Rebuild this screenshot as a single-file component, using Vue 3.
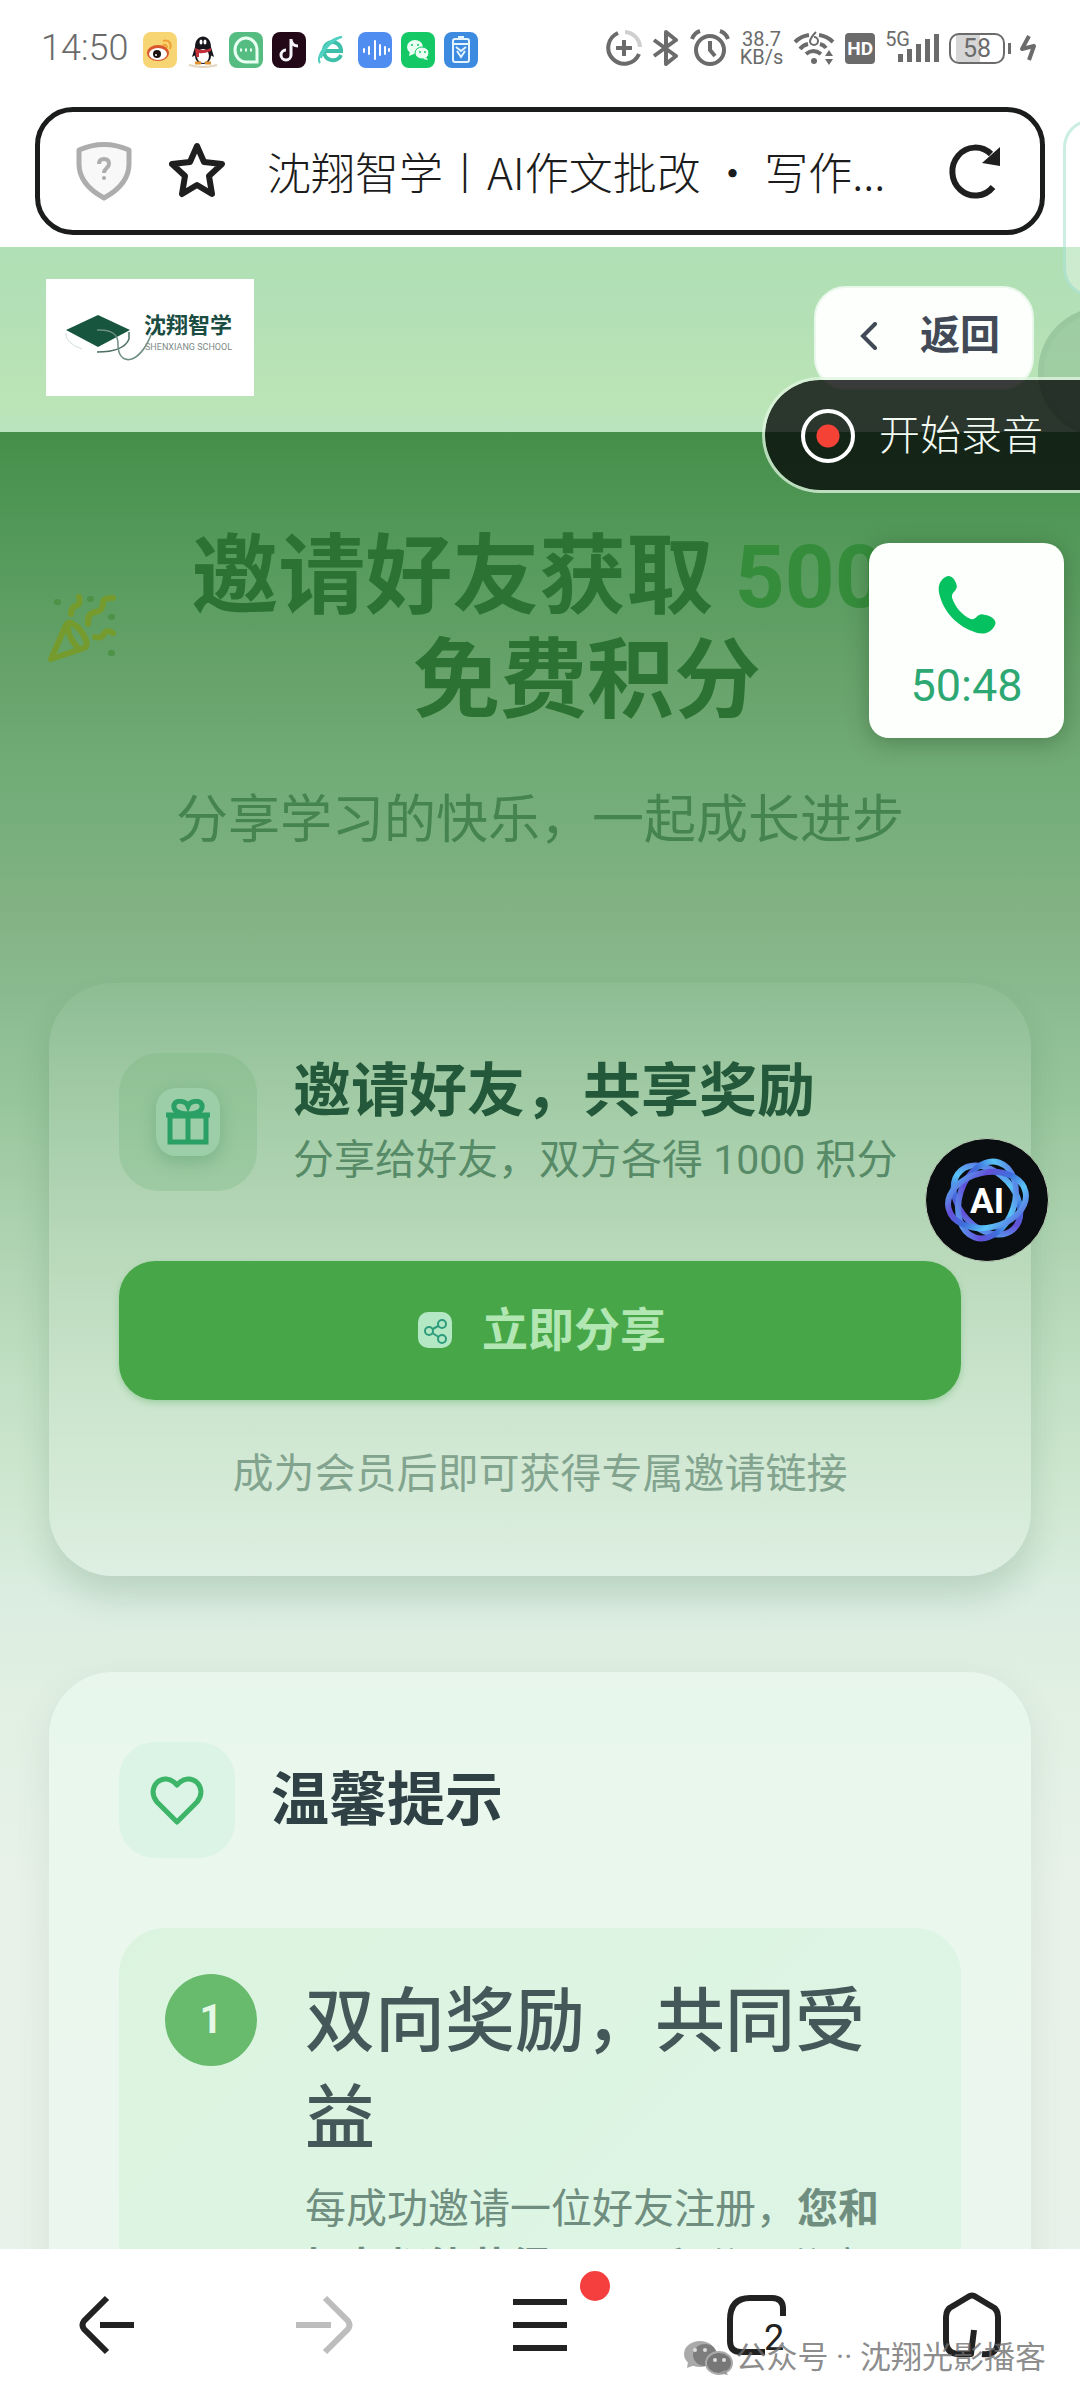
<script setup>
/**
 * COMPONENTE: App.vue
 * Descripción: Página de invitación dentro del navegador móvil.
 */
import { ref } from 'vue'

// --- ESTADO REACTIVO ---
const tituloPagina = ref('沈翔智学丨AI作文批改 ・ 写作...')
const numPestanas = ref(2)
const duracionLlamada = ref('50:48')

// Barras de cobertura (altura en px)
const cobertura = [8, 13, 18, 23, 28]

// Pétalos del logo de AI
const petalos = [0, 60, 120]
</script>

<template>
    <div class="pantalla">
        <!-- Barra de estado -->
        <div class="estado">
            <span class="hora">14:50</span>
            <div class="apps">
                <svg viewBox="0 0 34 36">
                    <rect width="34" height="36" rx="8" fill="#f7d573" />
                    <ellipse cx="15" cy="21" rx="11" ry="8" fill="#d9552c" />
                    <ellipse cx="15" cy="22" rx="9" ry="6" fill="#fff" />
                    <circle cx="14" cy="22" r="4" fill="#1d1410" />
                    <circle cx="13" cy="23" r="1" fill="#fff" />
                    <path d="M20 9c6-2 9 3 7 8M20 13c3-1 4 1 4 3" fill="none" stroke="#ef9f35" stroke-width="2" />
                </svg>
                <svg viewBox="0 0 34 36">
                    <path d="M3 33q14 4 28 0" fill="none" stroke="#e3d4bd" stroke-width="2" />
                    <path d="M9 15C9 1 25 1 25 15l3 10-4-2H10l-4 2z" fill="#15151b" />
                    <ellipse cx="17" cy="24" rx="8" ry="8" fill="#15151b" />
                    <ellipse cx="17" cy="24" rx="6" ry="7" fill="#fff" />
                    <ellipse cx="15" cy="10" rx="1.5" ry="2.5" fill="#fff" />
                    <ellipse cx="19" cy="10" rx="1.5" ry="2.5" fill="#fff" />
                    <path d="M9 16q8 4 16 0v3q-8 3-12 2v4h-3z" fill="#c3303a" />
                    <path d="M9 31h6M19 31h6" stroke="#e0902c" stroke-width="3" />
                </svg>
                <svg viewBox="0 0 34 36">
                    <rect width="34" height="36" rx="8" fill="#55bd82" />
                    <path d="M28 30V18a11 12 0 1 0-11 12z" fill="none" stroke="#e9fff2" stroke-width="3" />
                    <path d="M11 18h2M16 18h2M21 18h2" stroke="#e9fff2" stroke-width="3" />
                </svg>
                <svg viewBox="0 0 34 36">
                    <rect width="34" height="36" rx="8" fill="#230817" />
                    <path d="M19 7v16a5 5 0 1 1-5-5M19 8c1 4 3 6 7 6" fill="none" stroke="#f4f4f8" stroke-width="3" />
                </svg>
                <svg viewBox="0 0 34 36">
                    <path d="M9 19h17c0-12-17-12-17 0 0 11 14 12 17 4" fill="none" stroke="#3ebfa9" stroke-width="4" />
                    <path d="M5 31c-5-6 8-25 22-26-8 2-18 11-21 21" fill="none" stroke="#4fd0c0" stroke-width="2" />
                </svg>
                <svg viewBox="0 0 34 36">
                    <rect width="34" height="36" rx="8" fill="#4f8df0" />
                    <path d="M6 17v3M11 15v7M17 9v18M22 13v10M27 15v7M31 17v2" stroke="#fff" stroke-width="2"
                        stroke-linecap="round" />
                </svg>
                <svg viewBox="0 0 34 36">
                    <rect width="34" height="36" rx="8" fill="#14c866" />
                    <ellipse cx="14" cy="15" rx="8" ry="7" fill="#eafff2" />
                    <ellipse cx="21" cy="21" rx="7" ry="6" fill="#eafff2" stroke="#14c866" />
                    <path d="m9 19-1 5 5-2zM25 25l2 3-5-1z" fill="#eafff2" />
                    <circle cx="11" cy="13" r="1" fill="#14c866" />
                    <circle cx="17" cy="13" r="1" fill="#14c866" />
                    <circle cx="19" cy="20" r="1" fill="#14c866" />
                    <circle cx="24" cy="20" r="1" fill="#14c866" />
                </svg>
                <svg viewBox="0 0 34 36">
                    <rect width="34" height="36" rx="8" fill="#3c8be0" />
                    <rect x="9" y="7" width="16" height="23" rx="2" fill="none" stroke="#e4f4ff" stroke-width="2" />
                    <path d="M14 5h6M10 12h14M12 15l5 4 5-4M13 19l4 6 4-6" fill="none" stroke="#e4f4ff"
                        stroke-width="2" />
                </svg>
            </div>
            <div class="sistema">
                <svg width="36" height="38" viewBox="0 0 36 38">
                    <path d="M12 4a16 16 0 1 0 21 21" fill="none" stroke="#6b6b6b" stroke-width="4" />
                    <path d="M19 3a16 16 0 0 1 15 15" fill="none" stroke="#cfcfcf" stroke-width="4" />
                    <path d="M18 11v16M10 19h16" stroke="#6b6b6b" stroke-width="4" />
                </svg>
                <svg width="28" height="36" viewBox="0 0 28 36">
                    <path d="m2 10 22 16-10 8V2l10 8L2 26" fill="none" stroke="#6b6b6b" stroke-width="4"
                        stroke-linejoin="round" />
                </svg>
                <svg width="40" height="38" viewBox="0 0 40 38">
                    <circle cx="20" cy="21" r="14" fill="none" stroke="#6b6b6b" stroke-width="4" />
                    <path d="M20 12v9l5 6M2 10q2-6 8-8M38 10q-2-6-8-8" fill="none" stroke="#6b6b6b" stroke-width="4" />
                </svg>
                <span class="velocidad">38.7<br>KB/s</span>
                <svg width="42" height="36" viewBox="0 0 42 36">
                    <path d="M2 12q6-6 14-7M26 5q8 1 14 7M7 19q3-4 8-5M27 14q4 1 6 4M13 24q7-6 15 0" fill="none"
                        stroke="#6b6b6b" stroke-width="4" />
                    <path d="M23 2q-5 5-6 9a4 4 0 1 0 4-4" fill="none" stroke="#6b6b6b" stroke-width="2" />
                    <circle cx="21" cy="31" r="3" fill="#6b6b6b" />
                    <path d="m32 26 4-6 4 6zM32 29h8l-4 6z" fill="#6b6b6b" />
                </svg>
                <span class="hd">HD</span>
                <span class="red">5G</span>
                <span class="cobertura">
                    <i v-for="alto in cobertura" :key="alto" :style="{ height: alto + 'px' }"></i>
                </span>
                <span class="bateria">58</span>
                <svg width="18" height="28" viewBox="0 0 18 28">
                    <path d="M10 2 3 15l12-3-5 14" fill="none" stroke="#6b6b6b" stroke-width="4"
                        stroke-linejoin="round" />
                </svg>
            </div>
        </div>

        <!-- Barra de direcciones -->
        <div class="barra-url">
            <svg class="ico-url" viewBox="0 0 56 60">
                <path d="M3 9q25-11 50 0v14c0 17-14 28-25 34C17 51 3 40 3 23z" fill="#f8f8f8" stroke="#adadad"
                    stroke-width="5" stroke-linejoin="round" />
                <path d="M23 23q0-5 5-5t5 5c0 4-5 4-5 9" fill="none" stroke="#adadad" stroke-width="4" />
                <circle cx="28" cy="37" r="2" fill="#adadad" />
            </svg>
            <button type="button" class="btn-icono btn-estrella" aria-label="收藏">
                <svg class="ico-url" viewBox="0 0 56 60">
                    <path d="m28 5 7 16 18 2-13 12 3 18-15-9-15 9 3-18L3 23l18-2z" fill="none" stroke="#1f1f1f"
                        stroke-width="6" stroke-linejoin="round" />
                </svg>
            </button>
            <input v-model="tituloPagina" class="campo-url" type="text" aria-label="网址">
            <button type="button" class="btn-icono" aria-label="刷新">
                <svg class="ico-url" viewBox="0 0 56 60">
                    <path d="M45 46A23 24 0 1 1 43 13" fill="none" stroke="#1f1f1f" stroke-width="6" />
                    <path d="M52 6v19l-18-3z" fill="#1f1f1f" />
                </svg>
            </button>
        </div>

        <!-- Contenido web -->
        <main class="pagina">
            <header class="cabecera">
                <svg class="logo" viewBox="0 0 208 117" role="img" aria-label="沈翔智学">
                    <rect width="208" height="117" fill="#fff" />
                    <path d="M20 54q-1 10 16 16" fill="none" stroke="#d3ded9" stroke-width="1" />
                    <path d="M83 53v7Q78 73 51 73" fill="none" stroke="#4d6f63" stroke-width="1.5" />
                    <path d="m20 51 32-15 32 15-32 17z" fill="#17553f" />
                    <path d="M51 51q22-1 21 15c0 20 20 22 33-10" fill="none" stroke="#6f8f82" stroke-width="1.5" />
                    <text x="98" y="54" class="logo-nombre">沈翔智学</text>
                    <text x="99" y="71" class="logo-sub">SHENXIANG SCHOOL</text>
                </svg>
                <button type="button" class="btn-volver">
                    <svg width="18" height="28" viewBox="0 0 18 28">
                        <path d="M15 2 3 14l12 12" fill="none" stroke="#434a57" stroke-width="4"
                            stroke-linecap="round" />
                    </svg>
                    返回
                </button>
            </header>

            <div class="contenido">
                <section class="hero">
                    <div class="hero-fila">
                        <svg class="fiesta" viewBox="0 0 72 70">
                            <path d="M21 31 6 65l33-11q4-2 2-8-5-12-13-16-4-3-7 1Z" />
                            <path d="M23 34q1 11 10 20" />
                            <path d="M34 3q2 7-3 9-5 1-5 8" />
                            <path d="M68 4q-11-1-10 7-2 7-8 7-8 2-7 12" />
                            <path d="M68 39q-7-4-9 1-3 5-9 3" />
                            <path class="confeti" d="M12 8h1M45 5h1M66 23h1M66 59h1" />
                        </svg>
                        <h1>邀请好友获取 <span class="puntos">500</span><br>免费积分</h1>
                    </div>
                    <p class="lema">分享学习的快乐，一起成长进步</p>
                </section>

                <section class="tarjeta tarjeta-invitar">
                    <div class="invitar-fila">
                        <div class="regalo">
                            <div class="regalo-int">
                                <svg width="46" height="46" viewBox="0 0 46 46">
                                    <path d="M5 17h36v26H5zM1 16h44M23 17v26" fill="none" stroke="#2ba066"
                                        stroke-width="5" />
                                    <path d="M23 15C14 15 8 12 9 6c2-6 12-4 14 1 2-5 12-7 14-1 1 6-5 9-14 9z"
                                        fill="none" stroke="#2ba066" stroke-width="5" />
                                </svg>
                            </div>
                        </div>
                        <div>
                            <h2 class="invitar-titulo">邀请好友，共享奖励</h2>
                            <p class="invitar-sub">分享给好友，双方各得 1000 积分</p>
                        </div>
                    </div>
                    <button type="button" class="btn-compartir">
                        <svg width="34" height="36" viewBox="0 0 34 36">
                            <rect width="34" height="36" rx="10" fill="#b4e8c4" />
                            <path d="m11 19 13-7M11 19l13 8" stroke="#2d9c7c" stroke-width="2" />
                            <g fill="#b4e8c4" stroke="#2d9c7c" stroke-width="2">
                                <circle cx="11" cy="19" r="4" />
                                <circle cx="24" cy="12" r="4" />
                                <circle cx="24" cy="27" r="4" />
                            </g>
                        </svg>
                        立即分享
                    </button>
                    <p class="nota">成为会员后即可获得专属邀请链接</p>
                </section>

                <section class="tarjeta tarjeta-consejos">
                    <div class="consejos-cab">
                        <div class="corazon">
                            <svg width="56" height="52" viewBox="0 0 56 52">
                                <path d="M28 48 8 28C-4 14 14-5 28 11 42-5 60 14 48 28z" fill="none" stroke="#3db568"
                                    stroke-width="5" stroke-linejoin="round" />
                            </svg>
                        </div>
                        <h2>温馨提示</h2>
                    </div>
                    <div class="consejo">
                        <span class="numero">1</span>
                        <div class="consejo-texto">
                            <h3>双向奖励，共同受益</h3>
                            <p>每成功邀请一位好友注册，<strong>您和好友都能获得</strong> 1000 积分，分享</p>
                        </div>
                    </div>
                </section>
            </div>
        </main>

        <!-- Navegación inferior -->
        <nav class="nav-inferior">
            <button type="button" class="btn-icono" aria-label="后退">
                <svg width="60" height="64" viewBox="0 0 60 64">
                    <path d="M29 5 6 28q-3 4 0 8l23 23" fill="none" stroke="#222" stroke-width="6" />
                    <path d="M22 32h34" stroke="#222" stroke-width="6" />
                </svg>
            </button>
            <button type="button" class="btn-icono" aria-label="前进">
                <svg width="60" height="64" viewBox="0 0 60 64">
                    <path d="m31 5 23 23q3 4 0 8L31 59" fill="none" stroke="#bdbdbd" stroke-width="6" />
                    <path d="M2 32h35" stroke="#bdbdbd" stroke-width="6" />
                </svg>
            </button>
            <button type="button" class="btn-icono btn-menu" aria-label="菜单">
                <svg width="54" height="64" viewBox="0 0 54 64">
                    <path d="M0 9h54M0 32h54M0 55h54" stroke="#222" stroke-width="6" />
                </svg>
            </button>
            <button type="button" class="btn-icono btn-pestanas" aria-label="标签页">
                <svg width="60" height="64" viewBox="0 0 60 64">
                    <path d="M39 59H15Q4 59 4 48V27Q4 5 24 5h22q11 0 11 11v7" fill="none" stroke="#222"
                        stroke-width="6" />
                </svg>
                <span>{{ numPestanas }}</span>
            </button>
            <button type="button" class="btn-icono" aria-label="主页">
                <svg width="60" height="68" viewBox="0 0 60 68">
                    <path d="M40 63q16 2 16-14V26q0-8-7-11L34 6q-4-3-8 0L11 15q-7 3-7 11v23q0 14 13 14h12l3-24"
                        fill="none" stroke="#222" stroke-width="6" stroke-linejoin="round" />
                </svg>
            </button>
        </nav>

        <!-- Elementos flotantes sobre la página -->
        <div class="panel-lateral"></div>
        <div class="burbuja-lateral"></div>

        <button type="button" class="btn-grabar">
            <span class="grabar-circulo"></span>
            开始录音
        </button>

        <div class="llamada">
            <svg width="62" height="60" viewBox="0 0 62 64">
                <path
                    d="M8 2c5-3 10 1 12 9 1 6-6 7-5 13 3 10 11 19 20 23 5 2 7-6 13-5 9 1 15 6 13 11-4 9-13 12-24 7C19 53 5 38 1 18 0 10 3 5 8 2z"
                    fill="#06c160" />
            </svg>
            <span>{{ duracionLlamada }}</span>
        </div>

        <button type="button" class="btn-ai" aria-label="AI">
            <svg viewBox="0 0 124 124">
                <defs>
                    <linearGradient id="aro" x1="0" y1="0" x2="1" y2="1">
                        <stop offset="0" stop-color="#5a50d8" />
                        <stop offset="0.3" stop-color="#5ac4f7" />
                        <stop offset="0.5" stop-color="#3d6fdc" />
                        <stop offset="0.7" stop-color="#6350d8" />
                        <stop offset="1" stop-color="#52c6fa" />
                    </linearGradient>
                </defs>
                <ellipse v-for="giro in petalos" :key="giro" cx="62" cy="62" rx="40" ry="28" fill="none"
                    stroke="url(#aro)" stroke-width="6" :transform="`rotate(${giro + 48} 62 62)`" />
                <text x="62" y="75" text-anchor="middle">AI</text>
            </svg>
        </button>

        <div class="marca">
            <svg width="50" height="36" viewBox="0 0 50 36">
                <ellipse cx="17" cy="14" rx="16" ry="13" fill="#aaa" />
                <path d="m5 22-1 6 8-3z" fill="#aaa" />
                <ellipse cx="22" cy="15" rx="12" ry="11" fill="#7d7d7d" />
                <ellipse cx="36" cy="23" rx="13" ry="11" fill="#777" stroke="#aaa" stroke-width="2" />
                <path d="m42 30 3 5-9-2z" fill="#999" />
                <circle cx="12" cy="10" r="2" fill="#ddd" />
                <circle cx="22" cy="10" r="2" fill="#ddd" />
                <circle cx="32" cy="20" r="2" fill="#ddd" />
                <circle cx="41" cy="20" r="2" fill="#ddd" />
            </svg>
            公众号 ·· 沈翔光影播客
        </div>
    </div>
</template>

<style>
body {
    margin: 0;
    background: #fefffe;
}
</style>

<style scoped>
.pantalla {
    position: relative;
    display: flex;
    flex-direction: column;
    height: 100vh;
    overflow: hidden;
    background: #fefffe;
    font-family: Roboto, "Noto Sans CJK SC", sans-serif;
}

h1,
h2,
h3,
p {
    margin: 0;
}

button {
    font-family: inherit;
    cursor: pointer;
}

.btn-icono {
    display: flex;
    align-items: center;
    justify-content: center;
    padding: 0;
    border: none;
    background: none;
}

/* Barra de estado */
.estado {
    display: flex;
    align-items: center;
    height: 96px;
    padding: 0 43px 11px 41px;
    color: #6b6b6b;
}

.hora {
    font-size: 36px;
    font-weight: 300;
}

.apps {
    display: flex;
    gap: 9px;
    margin-left: 15px;
    padding-top: 4px;
}

.apps svg {
    width: 34px;
    height: 36px;
}

.sistema {
    display: flex;
    align-items: center;
    gap: 10px;
    margin-left: auto;
}

.velocidad {
    font-size: 20px;
    line-height: 18px;
    text-align: center;
}

.hd {
    padding: 0 2px;
    border-radius: 4px;
    background: #6b6b6b;
    color: #fff;
    font-size: 19px;
    font-weight: 700;
    line-height: 31px;
}

.red {
    align-self: flex-start;
    font-size: 20px;
    line-height: 20px;
}

.cobertura {
    display: flex;
    align-items: flex-end;
    gap: 4px;
    margin-left: -22px;
}

.cobertura i {
    width: 5px;
    background: #6b6b6b;
}

.bateria {
    position: relative;
    width: 52px;
    margin-right: 4px;
    border: 2px solid #6b6b6b;
    border-radius: 10px;
    background: linear-gradient(90deg, #fff 10%, #d6d6d6 10% 56%, #fff 56%);
    font-size: 25px;
    line-height: 27px;
    text-align: center;
}

.bateria::after {
    content: "";
    position: absolute;
    top: 8px;
    right: -8px;
    width: 3px;
    height: 11px;
    background: #6b6b6b;
}

/* Barra de direcciones */
.barra-url {
    display: flex;
    align-items: center;
    height: 118px;
    margin: 0 35px 12px;
    padding: 0 36px;
    border: 5px solid #1b1c1c;
    border-radius: 38px;
}

.ico-url {
    flex: none;
    width: 56px;
    height: 60px;
}

.btn-estrella {
    margin: 0 42px 0 37px;
}

.campo-url {
    flex: 1;
    min-width: 0;
    height: 64px;
    padding: 0;
    border: none;
    outline: none;
    background: none;
    color: #1c1c1c;
    font-family: "Noto Sans CJK SC", sans-serif;
    font-size: 44px;
    font-weight: 300;
    line-height: 60px;
}

/* Contenido web */
.pagina {
    display: flex;
    flex: 1;
    flex-direction: column;
    min-height: 0;
    overflow: hidden;
}

.cabecera {
    display: flex;
    align-items: center;
    justify-content: space-between;
    padding: 32px 46px 36px;
    background: linear-gradient(#b0e0b5, #b4e0b6 40%, #bbe5b6 85%, #bae4bf);
}

.logo {
    width: 208px;
    height: 117px;
}

.logo-nombre {
    fill: #1b4d42;
    font-size: 22px;
    font-weight: 700;
}

.logo-sub {
    fill: #7d8a86;
    font-size: 9px;
}

.btn-volver {
    display: flex;
    align-items: center;
    gap: 42px;
    height: 104px;
    padding: 0 32px 4px 44px;
    border: 2px solid #eaf7eb;
    border-radius: 32px;
    background: #fcfffc;
    color: #434a57;
    font-size: 40px;
    font-weight: 700;
    line-height: 48px;
}

.contenido {
    flex: 1;
    min-height: 0;
    overflow: hidden;
    padding: 0 49px;
    background: linear-gradient(#448f4a, #54995a 6%, #6ba56e 15%, #73ad79 20%, #82b283 26%, #8abb90 31%, #98c69c 37%, #b0d4b2 45%, #c3e1c6 53%, #d0e8d2 59%, #dbede0 64%, #e1f0e3 70%, #e8f2e8 80%, #e9f2ea);
}

.hero {
    padding-top: 93px;
    text-align: center;
}

.hero-fila {
    display: flex;
    align-items: center;
}

.fiesta {
    flex: none;
    width: 72px;
    height: 70px;
    margin: 0 26px 0 -4px;
    fill: none;
    stroke: #759b2f;
    stroke-width: 6;
    stroke-linecap: round;
    stroke-linejoin: round;
}

.confeti {
    stroke: #4c9247;
}

h1 {
    flex: 1;
    color: #2b7233;
    font-size: 87px;
    font-weight: 700;
    line-height: 104px;
}

.puntos {
    display: inline-block;
    width: 248px;
    color: #358d3b;
    text-align: left;
}

.lema {
    margin-top: 52px;
    color: #458350;
    font-size: 52px;
    line-height: 72px;
}

.tarjeta {
    padding: 70px 70px 72px;
    border-radius: 64px;
}

.tarjeta-invitar {
    margin-top: 126px;
    background: linear-gradient(rgba(255, 255, 255, 0.04), rgba(255, 255, 255, 0.1) 20%, rgba(255, 255, 255, 0.14));
    box-shadow: 0 20px 32px rgba(30, 90, 50, 0.16);
}

.invitar-fila {
    display: flex;
    align-items: center;
    gap: 36px;
}

.regalo {
    display: flex;
    flex: none;
    align-items: center;
    justify-content: center;
    width: 138px;
    height: 138px;
    border-radius: 40px;
    background: rgba(110, 178, 122, 0.28);
}

.regalo-int {
    display: flex;
    align-items: center;
    justify-content: center;
    width: 64px;
    height: 68px;
    border-radius: 20px;
    background: #9ccfa7;
    box-shadow: 0 6px 16px rgba(40, 120, 70, 0.25);
}

.invitar-titulo {
    color: #23593a;
    font-size: 58px;
    font-weight: 700;
    line-height: 76px;
}

.invitar-sub {
    color: #578b68;
    font-size: 41px;
    line-height: 62px;
}

.btn-compartir {
    display: flex;
    align-items: center;
    justify-content: center;
    gap: 30px;
    width: 100%;
    height: 139px;
    margin-top: 70px;
    padding: 0 0 2px 4px;
    border: none;
    border-radius: 36px;
    background: #47a648;
    box-shadow: 0 3px 6px rgba(60, 160, 70, 0.3);
    color: #b2e7b3;
    font-size: 46px;
    font-weight: 700;
    line-height: 56px;
}

.nota {
    margin-top: 44px;
    color: #82a48f;
    font-size: 41px;
    line-height: 60px;
    text-align: center;
}

.tarjeta-consejos {
    margin-top: 96px;
    background: rgba(235, 250, 240, 0.7);
    box-shadow: 0 12px 36px rgba(60, 90, 70, 0.1);
}

.consejos-cab {
    display: flex;
    align-items: center;
    gap: 36px;
    color: #2f4145;
}

.consejos-cab h2 {
    font-size: 58px;
    font-weight: 700;
    line-height: 72px;
}

.corazon {
    display: flex;
    align-items: center;
    justify-content: center;
    width: 116px;
    height: 116px;
    border-radius: 36px;
    background: #dcf4e5;
}

.consejo {
    display: flex;
    align-items: flex-start;
    gap: 48px;
    margin-top: 70px;
    padding: 46px;
    border-radius: 46px;
    background: linear-gradient(135deg, #dbf4df, #def5e6);
}

.numero {
    flex: none;
    width: 92px;
    border-radius: 50%;
    background: #68ba6c;
    color: #e4f8e6;
    font-size: 40px;
    font-weight: 700;
    line-height: 92px;
    text-align: center;
}

.consejo-texto h3 {
    color: #44585a;
    font-size: 70px;
    font-weight: 500;
    line-height: 97px;
}

.consejo-texto p {
    margin-top: 12px;
    color: #6f8e7f;
    font-size: 41px;
    line-height: 59px;
}

/* Navegación inferior */
.nav-inferior {
    display: grid;
    flex: none;
    grid-template-columns: repeat(5, 1fr);
    align-items: center;
    height: 151px;
    background: #fff;
}

.btn-menu,
.btn-pestanas {
    position: relative;
}

.btn-menu::after {
    content: "";
    position: absolute;
    top: -22px;
    left: calc(50% + 40px);
    width: 30px;
    height: 30px;
    border-radius: 50%;
    background: #f53f3f;
}

.btn-pestanas span {
    position: absolute;
    top: 24px;
    left: calc(50% + 8px);
    color: #222;
    font-size: 36px;
}

/* Flotantes */
.panel-lateral,
.burbuja-lateral,
.btn-grabar,
.llamada,
.btn-ai,
.marca {
    position: absolute;
}

.panel-lateral {
    top: 119px;
    right: -40px;
    width: 51px;
    height: 172px;
    border: 3px solid rgba(140, 215, 195, 0.45);
    border-radius: 30px;
    background: rgba(255, 255, 255, 0.35);
}

.burbuja-lateral {
    top: 307px;
    right: -88px;
    width: 118px;
    height: 118px;
    border: 6px solid rgba(150, 195, 155, 0.5);
    border-radius: 50%;
    background: rgba(130, 180, 140, 0.45);
}

.btn-grabar {
    top: 377px;
    right: -3px;
    display: flex;
    align-items: center;
    gap: 24px;
    height: 116px;
    padding: 2px 37px 0 36px;
    border: 3px solid rgba(225, 245, 225, 0.75);
    border-radius: 58px 0 0 58px;
    background: rgba(8, 10, 10, 0.8);
    background-clip: padding-box;
    color: #f3fbf3;
    font-size: 41px;
    font-weight: 300;
    line-height: 48px;
}

.grabar-circulo {
    width: 46px;
    height: 46px;
    border: 4px solid #fff;
    border-radius: 50%;
    background: radial-gradient(circle, #f44336 11px, transparent 12px);
}

.llamada {
    top: 543px;
    right: 16px;
    display: flex;
    flex-direction: column;
    align-items: center;
    gap: 21px;
    width: 195px;
    padding: 32px 0 22px;
    border-radius: 20px;
    background: #fdfffd;
    box-shadow: 0 4px 22px rgba(30, 60, 30, 0.35);
    color: #2ea873;
    font-size: 45px;
    line-height: 60px;
}

.btn-ai {
    top: 1138px;
    right: 31px;
    width: 124px;
    height: 124px;
    padding: 0;
    border: 1px solid #b9cdb6;
    border-radius: 50%;
    background: #0b0e10;
}

.btn-ai svg {
    display: block;
}

.btn-ai text {
    fill: #fff;
    font-size: 36px;
    font-weight: 700;
}

.marca {
    right: 34px;
    bottom: 20px;
    display: flex;
    align-items: center;
    gap: 2px;
    color: rgba(110, 110, 110, 0.8);
    font-size: 31px;
    line-height: 44px;
}
</style>
